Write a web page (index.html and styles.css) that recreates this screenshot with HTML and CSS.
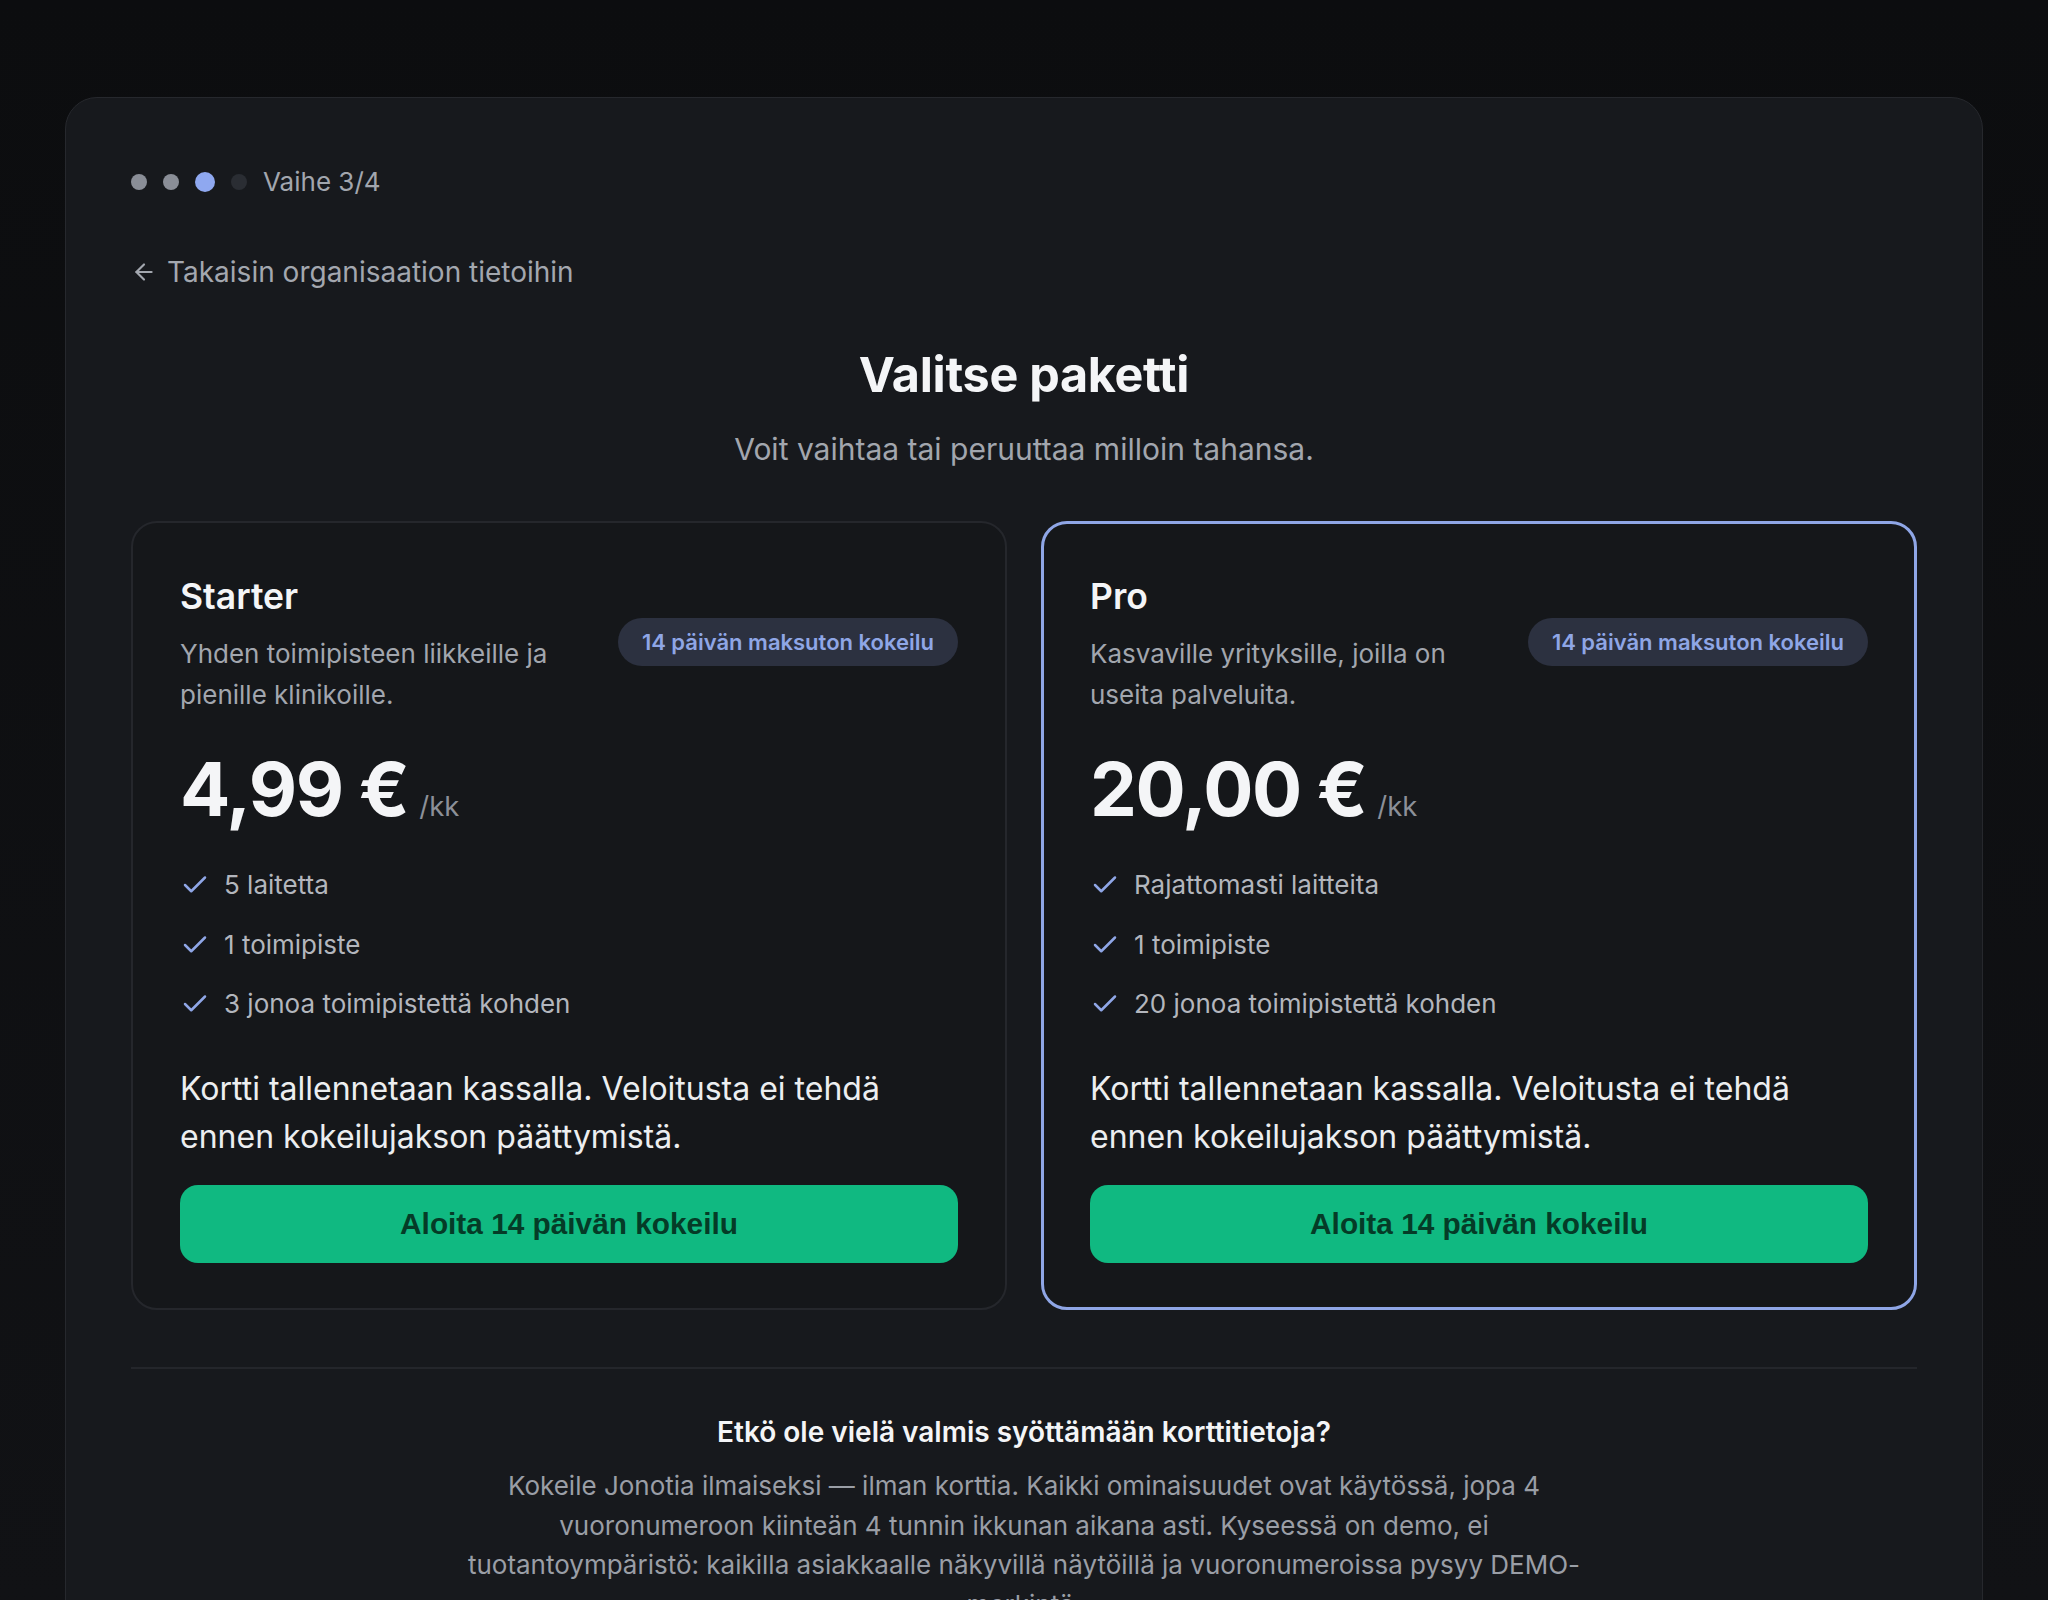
FILE: index.html
```html
<!DOCTYPE html>
<html lang="fi">
<head>
<meta charset="utf-8">
<title>Valitse paketti</title>
<link rel="stylesheet" href="styles.css">
</head>
<body>
<main class="shell">
  <div class="steps">
    <span class="dot done"></span>
    <span class="dot done"></span>
    <span class="dot active"></span>
    <span class="dot"></span>
    <span class="step-label">Vaihe 3/4</span>
  </div>

  <a class="back" href="#">
    <svg class="back-icon" viewBox="0 0 24 24" fill="none" stroke="currentColor" stroke-width="2" stroke-linecap="round" stroke-linejoin="round"><path d="m12 19-7-7 7-7"/><path d="M19 12H5"/></svg>
    <span>Takaisin organisaation tietoihin</span>
  </a>

  <h1 class="title">Valitse paketti</h1>
  <p class="subtitle">Voit vaihtaa tai peruuttaa milloin tahansa.</p>

  <div class="plans">
    <section class="card">
      <div class="card-head">
        <div class="card-info">
          <h2 class="plan-name">Starter</h2>
          <p class="plan-desc">Yhden toimipisteen liikkeille ja pienille klinikoille.</p>
        </div>
        <span class="badge">14 päivän maksuton kokeilu</span>
      </div>
      <div class="price"><span class="amount">4,99 €</span><span class="per">/kk</span></div>
      <ul class="features">
        <li><svg class="check" viewBox="0 0 24 24" fill="none" stroke="currentColor" stroke-width="2" stroke-linecap="round" stroke-linejoin="round"><path d="M20 6 9 17l-5-5"/></svg>5 laitetta</li>
        <li><svg class="check" viewBox="0 0 24 24" fill="none" stroke="currentColor" stroke-width="2" stroke-linecap="round" stroke-linejoin="round"><path d="M20 6 9 17l-5-5"/></svg>1 toimipiste</li>
        <li><svg class="check" viewBox="0 0 24 24" fill="none" stroke="currentColor" stroke-width="2" stroke-linecap="round" stroke-linejoin="round"><path d="M20 6 9 17l-5-5"/></svg>3 jonoa toimipistettä kohden</li>
      </ul>
      <p class="note">Kortti tallennetaan kassalla. Veloitusta ei tehdä ennen kokeilujakson päättymistä.</p>
      <button class="cta" type="button">Aloita 14 päivän kokeilu</button>
    </section>

    <section class="card card-pro">
      <div class="card-head">
        <div class="card-info">
          <h2 class="plan-name">Pro</h2>
          <p class="plan-desc">Kasvaville yrityksille, joilla on useita palveluita.</p>
        </div>
        <span class="badge">14 päivän maksuton kokeilu</span>
      </div>
      <div class="price"><span class="amount">20,00 €</span><span class="per">/kk</span></div>
      <ul class="features">
        <li><svg class="check" viewBox="0 0 24 24" fill="none" stroke="currentColor" stroke-width="2" stroke-linecap="round" stroke-linejoin="round"><path d="M20 6 9 17l-5-5"/></svg>Rajattomasti laitteita</li>
        <li><svg class="check" viewBox="0 0 24 24" fill="none" stroke="currentColor" stroke-width="2" stroke-linecap="round" stroke-linejoin="round"><path d="M20 6 9 17l-5-5"/></svg>1 toimipiste</li>
        <li><svg class="check" viewBox="0 0 24 24" fill="none" stroke="currentColor" stroke-width="2" stroke-linecap="round" stroke-linejoin="round"><path d="M20 6 9 17l-5-5"/></svg>20 jonoa toimipistettä kohden</li>
      </ul>
      <p class="note">Kortti tallennetaan kassalla. Veloitusta ei tehdä ennen kokeilujakson päättymistä.</p>
      <button class="cta" type="button">Aloita 14 päivän kokeilu</button>
    </section>
  </div>

  <hr class="divider">

  <section class="demo">
    <h3 class="demo-title">Etkö ole vielä valmis syöttämään korttitietoja?</h3>
    <p class="demo-text">Kokeile Jonotia ilmaiseksi — ilman korttia. Kaikki ominaisuudet ovat käytössä, jopa 4 vuoronumeroon kiinteän 4 tunnin ikkunan aikana asti. Kyseessä on demo, ei tuotantoympäristö: kaikilla asiakkaalle näkyvillä näytöillä ja vuoronumeroissa pysyy DEMO-merkintä.</p>
  </section>
</main>
</body>
</html>
```

FILE: styles.css
```css
* { box-sizing: border-box; }

html, body { height: 100%; }

body {
  margin: 0;
  background: linear-gradient(180deg, #0c0d0f 0%, #111215 100%);
  font-family: Inter, "Noto Sans", "Liberation Sans", sans-serif;
  color: #e8e9ec;
  overflow: hidden;
}

.shell {
  margin: 97px 65px 0;
  background: #17191d;
  border: 1px solid #26282d;
  border-radius: 32px;
  padding: 66px 65px 80px;
  min-height: 1600px;
}

.steps {
  display: flex;
  align-items: center;
  gap: 16px;
  height: 36px;
}

.dot {
  width: 16px;
  height: 16px;
  border-radius: 50%;
  background: #2a2d33;
}
.dot.done { background: #8a8e97; }
.dot.active { width: 20px; height: 20px; background: #8fa8f0; }

.step-label {
  font-size: 26px;
  color: #a2a6ae;
  line-height: 36px;
}

.back {
  display: inline-flex;
  align-items: center;
  gap: 10px;
  margin-top: 53px;
  color: #a3a7af;
  text-decoration: none;
  font-size: 28px;
  line-height: 38px;
}
.back-icon { width: 26px; height: 26px; }

.title {
  margin: 56px 0 0;
  text-align: center;
  font-size: 48.5px;
  line-height: 56px;
  font-weight: 700;
  color: #f4f5f7;
  letter-spacing: -0.3px;
}

.subtitle {
  margin: 25px 0 0;
  text-align: center;
  font-size: 30px;
  line-height: 42px;
  color: #a2a6ae;
}

.plans {
  margin-top: 51px;
  display: grid;
  grid-template-columns: 1fr 1fr;
  gap: 34px;
}

.card {
  background: #15171a;
  border: 2px solid #25272c;
  border-radius: 26px;
  padding: 52px 47px 45px;
  display: flex;
  flex-direction: column;
}
.card-pro {
  border: 3px solid #8fa6e6;
  padding: 51px 46px 44px;
}

.card-head {
  display: flex;
  align-items: center;
  gap: 24px;
}
.card-info { flex: 1; min-width: 0; }

.plan-name {
  margin: 0;
  font-size: 35.5px;
  line-height: 44px;
  font-weight: 600;
  color: #f4f5f7;
}

.plan-desc {
  margin: 14px 0 0;
  font-size: 26px;
  line-height: 41px;
  color: #a2a6ae;
}

.badge {
  flex: none;
  background: #2c3140;
  color: #8fa6e6;
  font-size: 22px;
  font-weight: 600;
  line-height: 48px;
  padding: 0 24px;
  border-radius: 24px;
  margin-top: -6px;
}

.price {
  margin-top: 34px;
  display: flex;
  align-items: baseline;
  gap: 11px;
  line-height: 80px;
}
.amount {
  font-size: 74.5px;
  font-weight: 700;
  color: #f4f5f7;
  letter-spacing: -1.5px;
}
.per {
  font-size: 27.5px;
  color: #8c9098;
}

.features {
  list-style: none;
  margin: 20px 0 0;
  padding: 0;
  display: flex;
  flex-direction: column;
  gap: 21.5px;
}
.features li {
  display: flex;
  align-items: center;
  gap: 14px;
  font-size: 26px;
  line-height: 38px;
  color: #b3b6bd;
}
.check { width: 30px; height: 30px; color: #8fa6e6; flex: none; }

.note {
  margin: 42px 0 0;
  font-size: 32px;
  line-height: 48px;
  color: #eceef0;
}

.cta {
  margin-top: 24px;
  height: 78px;
  border: 0;
  border-radius: 18px;
  background: #10b981;
  color: #053b27;
  font-family: "Liberation Sans", Arial, sans-serif;
  font-size: 29.8px;
  font-weight: 700;
  cursor: pointer;
}

.divider {
  margin: 57px 0 0;
  border: 0;
  height: 2px;
  background: #24262b;
}

.demo {
  text-align: center;
  margin-top: 43px;
}
.demo-title {
  margin: 0;
  font-size: 28px;
  line-height: 40px;
  font-weight: 600;
  color: #f4f5f7;
}
.demo-text {
  margin: 14px auto 0;
  max-width: 1130px;
  font-size: 26px;
  line-height: 39.5px;
  color: #9a9ea6;
}
```
